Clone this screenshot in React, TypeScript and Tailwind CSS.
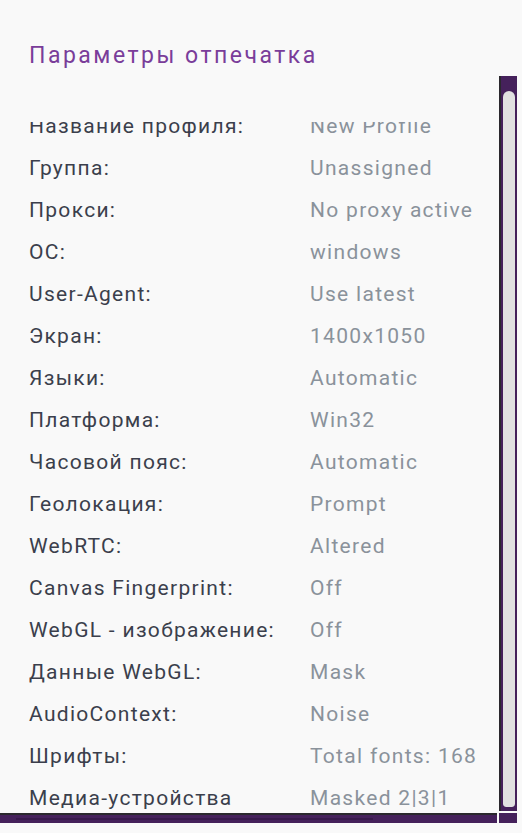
const rows: [string, string][] = [
  ['Название профиля:', 'New Profile'],
  ['Группа:', 'Unassigned'],
  ['Прокси:', 'No proxy active'],
  ['ОС:', 'windows'],
  ['User-Agent:', 'Use latest'],
  ['Экран:', '1400x1050'],
  ['Языки:', 'Automatic'],
  ['Платформа:', 'Win32'],
  ['Часовой пояс:', 'Automatic'],
  ['Геолокация:', 'Prompt'],
  ['WebRTC:', 'Altered'],
  ['Canvas Fingerprint:', 'Off'],
  ['WebGL - изображение:', 'Off'],
  ['Данные WebGL:', 'Mask'],
  ['AudioContext:', 'Noise'],
  ['Шрифты:', 'Total fonts: 168'],
  ['Медиа-устройства', 'Masked 2|3|1'],
];

export default function App() {
  return (
    <div className="h-[833px] w-[522px] overflow-hidden bg-[#f9f9f9] font-['Roboto','Noto_Sans',sans-serif]">
      <div className="h-[76px] pl-[29px] pt-[43px]">
        <h1 className="text-[23px] leading-[26px] tracking-[2.5px] text-[#7a3d9a]">Параметры отпечатка</h1>
      </div>

      <div className="flex h-[737px] pr-[5px]">
        <div className="flex flex-1 flex-col">
          <div className="h-[46px]" />
          <div className="flex-1 overflow-hidden">
            <div className="-mt-[16px] pl-[29px]">
              {rows.map(([label, value]) => (
                <div key={label} className="flex h-[42px] items-center text-[21px] tracking-[1.3px] whitespace-nowrap">
                  <span className="w-[281px] text-[#3b3f4c]">{label}</span>
                  <span className="text-[#8a929b]">{value}</span>
                </div>
              ))}
            </div>
          </div>
        </div>

        <div className="flex w-[18px] flex-col">
          <div className="flex h-[735px] border-l-2 border-[#2a282d] bg-[#45215b] pt-[15px] pl-[2px] pr-[2px] pb-[4px]">
            <div className="w-full rounded-t-[7px] rounded-b-[4px] bg-[#e1e1e1]" />
          </div>
        </div>
      </div>

      <div className="flex h-[10px] pr-[5px]">
        <div className="flex-1 border-t-2 border-[#2a282d] bg-[#45215b] pt-[3px] pl-[16px]">
          <div className="h-[2px] w-[357px] bg-[#38194b]" />
        </div>
        <div className="w-[2px]" />
        <div className="w-[18px] bg-[#45215b]" />
      </div>
    </div>
  );
}
